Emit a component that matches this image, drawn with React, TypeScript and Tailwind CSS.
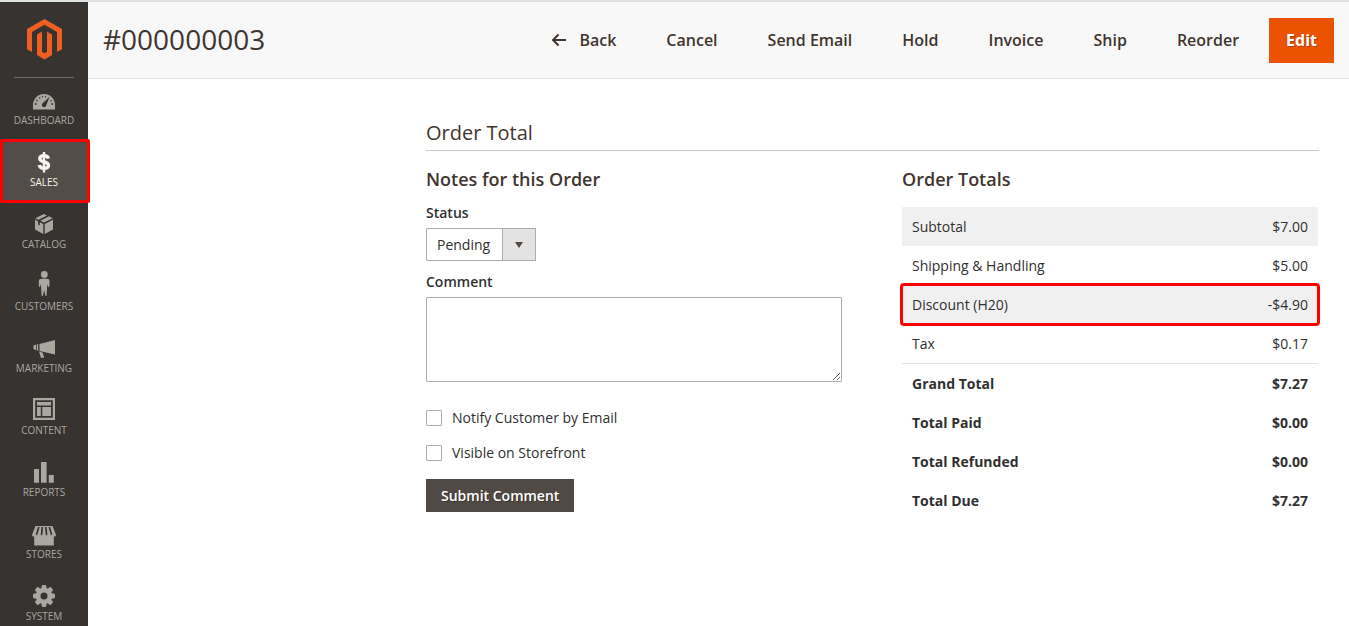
import type { ReactNode } from "react";

const Logo = () => {
   return (
      <svg width="35" height="41" viewBox="0 0 35 41" fill="#f05f22" aria-hidden="true">
         <path d="M17.5 0 35 10v20.2l-5 2.9V13L17.5 5.8 5 13v20.1l-5-2.9V10z" />
         <path d="M15 12.5v20.3l2.5 1.5 2.5-1.5V12.5l5 2.9v20.7L17.5 40.5 10 36.1V15.4z" />
      </svg>
   );
};

const Icon = ({ children }: { children: ReactNode }) => (
   <svg width="24" height="24" viewBox="0 0 24 24" fill="currentColor" className="overflow-visible" aria-hidden="true">{children}</svg>
);

const menu = [
   {
      name: "Dashboard",
      icon: (
         <Icon>
            <path d="M1 21.500V17a11 11 0 0 1 22 0v4.500z" />
            <g className="fill-[#373330]">
               <circle cx="3.800" cy="16" r="0.9" />
               <circle cx="5" cy="12.600" r="0.8" />
               <circle cx="7.600" cy="10" r="0.8" />
               <circle cx="10.500" cy="8.800" r="0.7" />
               <circle cx="13.500" cy="8.800" r="0.7" />
               <circle cx="19" cy="12.800" r="0.8" />
               <circle cx="20.200" cy="16" r="0.9" />
               <path d="m17.600 8.800-3.400 8.700a2.200 2.200 0 1 1-3.600-2.200z" />
            </g>
         </Icon>
      ),
   },
   {
      name: "Sales",
      active: true,
      icon: (
         <Icon>
            <path
               d="M16.400 8.600C16 6.600 14.300 5.700 12 5.700c-2.600 0-4.200 1.100-4.200 2.900 0 4.400 8.700 2.400 8.700 6.700 0 1.900-1.700 3.100-4.400 3.100-2.700 0-4.500-1.100-4.800-3.300"
               fill="none"
               stroke="currentColor"
               strokeWidth="3.400"
            />
            <path d="M10.800 2h2.400v20.500h-2.400z" />
         </Icon>
      ),
   },
   {
      name: "Catalog",
      icon: (
         <Icon>
            <path d="m12 2 3 1.400-8.600 4.300L3.300 6.300zM17 4.300l3.700 2L12 10.400 8.400 8.700z" />
            <path d="M3 7.800l3 1.500v3.200l1.800.9v-3.200l3.500 1.700v10L3 17.600zM21 7.800v9.800l-8.300 4.300v-10z" />
         </Icon>
      ),
   },
   {
      name: "Customers",
      icon: (
         <Icon>
            <circle cx="12.300" cy="0.500" r="3.400" />
            <path d="M9.500 4.700h5.700q2.300 0 2.300 2v5.500l-1.300 1-1-3-.6 11.500h-1.300L12.200 16l-1.300 5.700H9.600L9 10.200l-1.100 3-1.100-1V6.700q0-2 2.700-2z" />
         </Icon>
      ),
   },
   {
      name: "Marketing",
      icon: (
         <Icon>
            <path d="M23 4v14.500L7.500 15V8zM6.200 8.300v6.200H4.800V8.300zM4 8.600v5.600L1.500 13V9.600zM7 15.600l3.600.8 1.600 5.100-3.200.5z" />
         </Icon>
      ),
   },
   {
      name: "Content",
      icon: (
         <Icon>
            <path d="M1 0h22v22H1zm2.200 2.200v17.600h17.600V2.200z" fillRule="evenodd" />
            <path d="M5 4h14v3.600H5zM5 9h3.800v9H5zM10.300 9H19v9h-8.700z" />
         </Icon>
      ),
   },
   {
      name: "Reports",
      icon: (
         <Icon>
            <path d="M2 9h5v13.700H2zM9 2h5.600v20.700H9zM16.800 15h5v7.700h-5z" />
         </Icon>
      ),
   },
   {
      name: "Stores",
      icon: (
         <Icon>
            <path d="M3.500 4h17L24 13c0 2-4 2.300-4.500.2-.5 2-4.400 2-5 0-.5 2-4.500 2-5 0-.6 2-4.500 2-5 0C4 15.300 0 15 0 13z" />
            <path d="M2.200 14h19.600v9.500H2.200z" />
            <path
               d="M6.800 5 4.500 12.800M10.400 5l-.9 7.800M13.800 5l.8 7.800M17.300 5l2.300 7.800"
               fill="none"
               className="stroke-[#373330]"
               strokeWidth="1.700"
            />
         </Icon>
      ),
   },
   {
      name: "System",
      icon: (
         <Icon>
            <circle cx="12" cy="12" r="8.300" />
            {[0, 45, 90, 135].map((angle) => (
               <rect key={angle} x="9.600" y="1" width="4.800" height="22" rx="1.400" transform={`rotate(${angle} 12 12)`} />
            ))}
            <circle cx="12" cy="12" r="3.500" className="fill-[#373330]" />
         </Icon>
      ),
   },
];

const actions = ["Cancel", "Send Email", "Hold", "Invoice", "Ship", "Reorder"];

const totals = [
   { label: "Subtotal", value: "$7.00" },
   { label: "Shipping & Handling", value: "$5.00" },
   { label: "Discount (H20)", value: "-$4.90", marked: true },
   { label: "Tax", value: "$0.17" },
];

const grandTotals = [
   { label: "Grand Total", value: "$7.27" },
   { label: "Total Paid", value: "$0.00" },
   { label: "Total Refunded", value: "$0.00" },
   { label: "Total Due", value: "$7.27" },
];

const Sidebar = () => {
   return (
      <nav className="w-[88px] shrink-0 bg-[#373330]">
         <a href="#" aria-label="Magento" className="mx-[14px] flex h-[76px] justify-center border-b border-[#736963] pt-[17px]">
            <Logo />
         </a>
         <ul>
            {menu.map((item) => (
               <li key={item.name} className="relative">
                  <a
                     href="#"
                     className={`flex h-[62px] flex-col items-center pt-[10px] text-[10px] leading-4 uppercase ${item.active ? "bg-[#524d49] text-[#f7f3eb]" : "text-[#aaa6a0]"}`}
                  >
                     {item.icon}
                     {item.name}
                  </a>
                  {item.active && <span className="pointer-events-none absolute -inset-y-px -right-0.5 left-0 rounded-xs border-3 border-[#ff0000]" />}
               </li>
            ))}
         </ul>
      </nav>
   );
};

const Header = () => {
   return (
      <header className="flex h-[77px] items-center justify-between border-b border-[#e3e3e3] bg-[#f8f8f8] px-[15px] text-[#41362f]">
         <h1 className="pb-0.5 text-[28px] leading-9">#000000003</h1>
         <div className="flex items-center text-base font-semibold">
            <button type="button" className="flex h-[45px] items-center gap-3 px-[25px]">
               <svg width="16" height="16" viewBox="0 0 16 16" fill="none" stroke="currentColor" strokeWidth="2" aria-hidden="true">
                  <path d="M15 8H2.500M7.500 2.500 2 8l5.500 5.500" />
               </svg>
               Back
            </button>
            {actions.map((action) => (
               <button type="button" key={action} className="h-[45px] px-[25px]">{action}</button>
            ))}
            <button type="button" className="ml-[5px] h-[45px] bg-[#eb5202] px-[17px] font-bold text-white text-shadow-[1px_1px_0_rgba(0,0,0,0.25)]">Edit</button>
         </div>
      </header>
   );
};

const Notes = () => {
   return (
      <form>
         <h3 className="text-lg leading-6 font-semibold text-[#41362f]">Notes for this Order</h3>
         <label htmlFor="status" className="mt-3 block leading-5 font-semibold">Status</label>
         <div className="relative mt-[5px] w-[110px]">
            <select id="status" className="h-[33px] w-full appearance-none rounded-[1px] border border-[#adadad] bg-white pl-[10px]">
               <option>Pending</option>
            </select>
            <span className="pointer-events-none absolute inset-y-0 right-0 flex w-[34px] items-center justify-center border border-[#adadad] bg-[#e3e3e3]">
               <svg width="8" height="6" viewBox="0 0 8 6" fill="#514943" aria-hidden="true"><path d="M0 0h8L4 6z" /></svg>
            </span>
         </div>
         <label htmlFor="comment" className="mt-[11px] block leading-5 font-semibold">Comment</label>
         <textarea id="comment" className="mt-[5px] block h-[85px] w-full rounded-[1px] border border-[#adadad] bg-white p-2" />
         <label className="mt-[26px] flex items-center gap-[10px] leading-5">
            <input type="checkbox" className="size-4 appearance-none rounded-[1px] border border-[#adadad] bg-white checked:bg-[#514943]" />
            Notify Customer by Email
         </label>
         <label className="mt-[15px] flex items-center gap-[10px] leading-5">
            <input type="checkbox" className="size-4 appearance-none rounded-[1px] border border-[#adadad] bg-white checked:bg-[#514943]" />
            Visible on Storefront
         </label>
         <button type="button" className="mt-4 h-[33px] bg-[#514943] px-[15px] font-semibold text-white text-shadow-[1px_1px_0_rgba(0,0,0,0.3)]">Submit Comment</button>
      </form>
   );
};

const Totals = () => {
   return (
      <section>
         <h3 className="text-lg leading-6 font-semibold text-[#41362f]">Order Totals</h3>
         <table className="mt-4 w-full border-separate border-spacing-0">
            <tbody>
               {totals.map((item) => (
                  <tr key={item.label} className={`h-[39px] odd:bg-[#f0f0f0] ${item.marked ? "rounded-xs outline-3 -outline-offset-1 outline-[#ff0000]" : ""}`}>
                     <th scope="row" className="px-[10px] text-left font-normal">{item.label}</th>
                     <td className="px-[10px] text-right">{item.value}</td>
                  </tr>
               ))}
            </tbody>
            <tbody className="[&>tr:first-child>*]:border-t [&>tr:first-child>*]:border-[#e3e3e3]">
               {grandTotals.map((item) => (
                  <tr key={item.label} className="h-[39px] font-bold first:h-10">
                     <th scope="row" className="px-[10px] text-left">{item.label}</th>
                     <td className="px-[10px] text-right">{item.value}</td>
                  </tr>
               ))}
            </tbody>
         </table>
      </section>
   );
};

const App = () => {
   return (
      <div className="flex h-screen overflow-hidden border-t-2 border-[#dde0df] bg-white font-['Open_Sans',sans-serif] text-sm text-[#303030]">
         <Sidebar />
         <div className="min-w-0 flex-1">
            <Header />
            <main className="pt-10 pr-[30px] pl-[338px]">
               <h2 className="border-b border-[#cacaca] pb-[3px] text-xl leading-7 text-[#41362f]">Order Total</h2>
               <div className="mt-4 mr-px grid grid-cols-2 gap-15">
                  <Notes />
                  <Totals />
               </div>
            </main>
         </div>
      </div>
   );
};

export default App;
